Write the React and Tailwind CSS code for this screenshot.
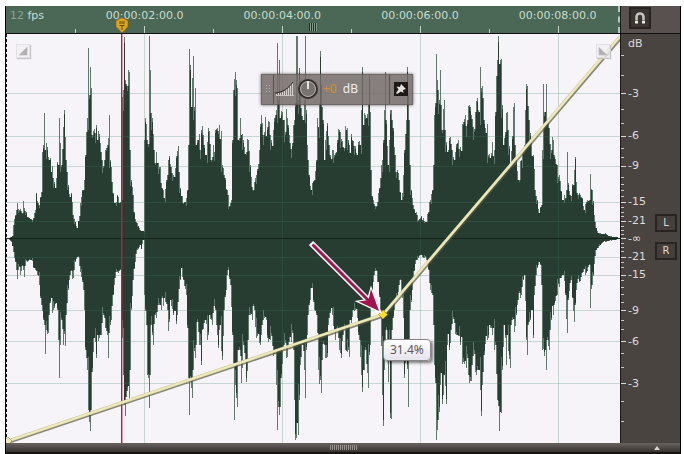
import React, { useState } from 'react'

const TIMECODES = ['00:00:02:00.0', '00:00:04:00.0', '00:00:06:00.0', '00:00:08:00.0']

// y positions on the same axis as the wave view
const DB_MARKS = [
  { label: 'dB',  y: 44 },
  { label: '-3',  y: 94 },
  { label: '-6',  y: 136 },
  { label: '-9',  y: 166 },
  { label: '-15', y: 202 },
  { label: '-21', y: 221 },
  { label: '-∞',  y: 239 },
  { label: '-21', y: 257 },
  { label: '-15', y: 275 },
  { label: '-9',  y: 311 },
  { label: '-6',  y: 342 },
  { label: '-3',  y: 384 },
]

const TOP = 34
const BOTTOM = 443
const MID = 238
const GRID_Y = [93, 136, 166, 202, 221, 257, 275, 310, 341, 383]
const GRID_X = [145, 283, 421, 559]
const MINOR_TICKS = [55, 75, 109, 123, 148, 157, 177, 184, 190, 196, 207, 212, 216, 226, 230, 234, 243, 247, 251, 262, 267, 280, 287, 294, 302, 320, 329, 353, 367, 401, 421]

const UPPER = [
  8,238, 12,236, 13,225, 15,215, 17,203, 19,210, 22,213, 23,201, 25,211, 27,217, 33,218, 35,210, 36,193, 38,203, 39,205, 41,192, 42,152,
  43,145, 44,113, 45,150, 46,143, 48,157, 50,158, 53,178, 55,188, 57,162, 58,165, 59,118, 60,143, 61,165, 63,127, 64,110, 65,137, 66,160, 68,185,
  70,197, 71,193, 73,215, 75,222, 77,228, 79,216, 80,203, 82,190, 84,180, 85,155, 86,132, 87,118, 88,48, 89,95, 90,67, 91,88, 92,135,
  94,129, 96,125, 97,140, 99,134, 101,152, 104,160, 106,148, 108,138, 109,115, 110,160, 112,182, 114,203, 117,195, 119,203, 121,200,
  122,97, 123,90, 124,37, 125,80, 127,86, 128,70, 129,72, 130,150, 131,180, 133,195, 134,212, 136,222, 140,230, 143,231, 144,140,
  145,118, 146,124, 148,144, 149,36, 150,70, 151,113, 152,118, 153,134, 154,150, 157,163, 160,167, 162,188, 164,198, 166,180, 168,160,
  170,164, 173,175, 175,168, 178,146, 179,172, 181,196, 183,203, 185,202, 187,190, 188,145, 189,49, 190,65, 191,107, 192,78, 193,56,
  194,107, 195,88, 196,145, 199,134, 200,150, 201,130, 203,135, 205,155, 207,142, 209,131, 211,160, 213,145, 217,128, 219,125, 221,131,
  222,165, 225,178, 227,190, 229,206, 231,200, 232,140, 233,90, 234,79, 236,80, 237,88, 238,140, 240,118, 241,135, 243,140, 246,152,
  248,140, 250,165, 253,190, 256,175, 259,150, 261,115, 263,135, 265,117, 267,127, 269,122, 271,140, 273,130, 276,110, 277,43, 278,100,
  279,60, 280,118, 282,112, 284,120, 287,118, 289,135, 292,143, 294,120, 295,103, 296,36, 297,36, 298,100, 299,68, 301,108, 303,120,
  304,100, 305,36, 306,110, 307,145, 309,175, 311,190, 314,180, 316,160, 317,118, 319,105, 320,51, 321,85, 323,120, 324,160, 327,123,
  329,145, 332,150, 334,155, 337,140, 340,132, 342,141, 346,130, 347,128, 349,145, 352,140, 355,146, 358,142, 360,145, 361,110, 362,67,
  363,125, 366,118, 368,105, 369,74, 370,112, 371,170, 372,196, 374,204, 377,202, 379,188, 381,165, 383,140, 384,110, 385,72, 386,120,
  388,165, 389,140, 390,110, 393,128, 395,155, 397,170, 399,180, 401,200, 403,175, 404,150, 406,120, 407,67, 408,95, 409,120, 410,165,
  411,190, 413,205, 416,212, 418,220, 421,216, 424,221, 426,222, 427,214, 430,200, 432,190, 433,165, 434,115, 436,54, 437,80, 439,100,
  440,70, 441,105, 442,130, 444,100, 445,130, 448,150, 450,137, 452,150, 455,152, 458,140, 460,147, 463,122, 465,115, 467,120, 470,107,
  472,119, 475,112, 477,98, 479,112, 480,67, 481,88, 483,98, 484,120, 487,124, 488,155, 490,158, 492,142, 494,150, 495,112, 496,76,
  498,36, 500,60, 501,59, 502,105, 503,145, 506,113, 508,130, 510,165, 513,107, 514,103, 515,145, 518,180, 521,160, 524,145, 525,110,
  526,84, 528,106, 529,120, 531,138, 533,155, 535,190, 537,200, 539,213, 541,205, 542,150, 543,84, 544,112, 546,84, 547,120, 549,128,
  551,150, 552,137, 554,155, 557,165, 559,175, 562,200, 564,195, 566,190, 567,152, 568,183, 570,195, 573,185, 575,157, 576,182, 578,195,
  582,198, 584,210, 587,200, 589,200, 590,174, 592,190, 594,215, 596,228, 598,233, 602,234, 605,233, 608,236, 615,237, 620,238,
]

const LOWER = [
  8,239, 11,242, 13,252, 15,262, 17,279, 19,267, 20,275, 22,266, 24,277, 26,261, 30,260, 34,268, 37,275, 39,285, 41,305, 43,320, 44,325,
  45,354, 46,330, 48,333, 50,303, 53,310, 55,304, 57,310, 58,340, 59,378, 60,345, 61,320, 63,345, 65,346, 66,315, 68,290, 70,275, 73,278,
  75,262, 78,257, 80,272, 83,290, 85,350, 86,358, 87,370, 88,410, 89,422, 90,431, 91,410, 92,372, 93,352, 94,338, 96,358, 97,335, 101,335,
  104,318, 107,335, 108,358, 110,325, 112,306, 114,285, 117,272, 120,270, 121,320, 123,375, 125,416, 126,397, 129,398, 130,370, 131,310,
  133,280, 135,262, 137,250, 140,245, 141,249, 143,240, 144,295, 146,325, 147,375, 149,408, 150,375, 151,325, 153,345, 155,315, 158,305,
  161,310, 164,298, 167,310, 168,331, 170,300, 173,315, 176,324, 178,302, 180,280, 181,268, 183,280, 186,295, 188,378, 189,415, 190,380,
  192,398, 193,370, 195,358, 197,322, 199,345, 201,365, 202,330, 205,320, 207,340, 209,315, 212,325, 215,310, 218,348, 220,325, 222,360,
  224,310, 226,290, 228,270, 230,285, 232,335, 234,420, 235,385, 237,407, 238,350, 241,383, 243,345, 246,382, 248,340, 249,315, 252,320,
  254,310, 256,338, 259,343, 262,325, 264,318, 267,338, 270,340, 272,346, 275,350, 276,385, 277,430, 279,415, 281,378, 283,350, 286,358,
  288,345, 291,342, 293,350, 294,400, 295,440, 296,438, 298,435, 299,400, 300,365, 302,345, 304,370, 305,398, 306,350, 308,315, 310,300,
  312,288, 314,310, 316,315, 318,370, 320,380, 321,393, 322,360, 324,345, 327,357, 328,325, 332,315, 335,340, 338,338, 341,358, 343,335,
  347,352, 349,357, 350,320, 353,310, 357,318, 359,340, 361,375, 362,392, 363,370, 365,350, 368,388, 370,345, 371,300, 373,282, 375,271,
  378,282, 380,310, 382,395, 383,426, 384,370, 386,330, 388,382, 389,340, 390,418, 391,419, 392,330, 394,310, 396,300, 400,280, 401,292,
  403,318, 404,378, 406,345, 408,407, 409,350, 410,310, 413,280, 416,260, 419,256, 422,257, 425,257, 428,270, 430,290, 432,295, 434,365,
  436,440, 437,430, 439,412, 440,385, 443,395, 444,375, 446,404, 447,345, 449,350, 451,330, 454,323, 457,335, 460,345, 463,362, 466,368,
  468,375, 471,381, 472,365, 475,372, 478,370, 480,390, 481,416, 482,385, 484,355, 487,340, 489,325, 492,335, 495,345, 497,400, 499,431,
  500,412, 501,413, 502,370, 504,325, 506,365, 507,335, 510,368, 511,325, 514,332, 516,315, 518,300, 520,298, 524,275, 526,340, 527,355,
  528,325, 530,320, 532,310, 533,338, 534,295, 536,275, 538,265, 540,265, 541,285, 542,350, 544,356, 546,370, 547,340, 549,350, 551,320,
  554,305, 557,295, 560,278, 563,275, 565,295, 567,333, 568,300, 571,280, 574,322, 576,290, 579,282, 583,272, 586,273, 589,265, 590,308,
  592,285, 594,264, 596,250, 599,246, 603,242, 608,241, 620,239,
]

// expands the x,y pairs to one level per pixel column
function sample(points) {
  const levels = []
  for (let i = 0; i < points.length - 2; i += 2) {
    const [x0, y0, x1, y1] = points.slice(i, i + 4)
    for (let x = x0; x < x1; x++) {
      const level = Math.abs(y0 + ((y1 - y0) * (x - x0)) / (x1 - x0) - MID)
      const ripple = x === x0 ? 1 : 1.08 - ((x * 7919) % 13) / 60
      levels.push(level * ripple)
    }
  }
  return levels
}

// the solid body is the lowest level among the neighbouring columns
function body(levels) {
  return levels.map((v, i) => {
    const near = Math.min(levels[i - 1] ?? v, v, levels[i + 1] ?? v)
    const noise = (i * 104729) % 7
    if (noise < 2) return v * 0.97
    return noise === 6 ? near * 0.9 : near
  })
}

function toPath(levels, sign) {
  return levels
    .map((v, i) => `M${8 + i} ${MID}h1v${Math.round(v) * sign}h-1z`)
    .join('')
}

const upper = sample(UPPER)
const lower = sample(LOWER)
const PEAKS = toPath(upper, -1) + toPath(lower, 1)
const BODY = toPath(body(upper), -1) + toPath(body(lower), 1)

export default function App() {
  return (
    <main className="flex h-screen min-h-80 flex-col bg-white pl-[5px] pr-[3px] pt-1.5 font-['DejaVu_Sans',sans-serif] text-[11px] text-[#dedbd7]">
      <div className="flex min-h-0 flex-1 flex-col border-x border-black bg-[#4a4441]">
        <header className="flex h-7 shrink-0 border-b border-[#111]">
          <Ruler />
          <div className="w-[60px] shrink-0 border-l border-[#1c1918] bg-[#59514f] pl-2 pt-px">
            <button aria-label="Snapping" className="flex h-[22px] w-[22px] items-center justify-center border-2 border-[#292422] bg-[#3b3532]">
              <MagnetIcon className="h-3.5 w-3.5" />
            </button>
          </div>
        </header>

        <div className="flex min-h-0 flex-1">
          <WaveView />
          <Scale />
        </div>

        <ScrollBar />
      </div>
    </main>
  )
}

function Ruler() {
  return (
    <div className="relative flex min-w-0 flex-1 flex-col border-r-2 border-dashed border-[#b9c6bd] bg-[#4b6857] text-[#c9dccd]">
      <div className="flex h-5 items-center overflow-hidden whitespace-nowrap">
        <span className="w-[11.4%] shrink-0 pl-1"><span className="text-[#8aa292]">12</span> fps</span>
        {TIMECODES.map((t) => (
          <span key={t} className="w-[22.5%] shrink-0 text-center">{t}</span>
        ))}
      </div>
      <svg className="h-[7px] w-full" viewBox="6 0 612 7" preserveAspectRatio="none" shapeRendering="crispEdges">
        {GRID_X.map((x) => (
          <path key={x} d={`M${x - 69.5} 3v4M${x - 0.5} 0v7`} stroke="#c3d3c8" fill="none" />
        ))}
      </svg>
      {/* zoom handle */}
      <svg className="absolute bottom-0.5 left-[49.3%] h-2 w-2.5" viewBox="0 0 10 8" shapeRendering="crispEdges">
        <path d="M1.5 0v8M3.5 0v8M5.5 0v8M7.5 0v8" stroke="#20352a" />
        <path d="M2.5 0v8M4.5 0v8M6.5 0v8M8.5 0v8" stroke="#83998b" />
      </svg>
      {/* playhead cap */}
      <svg className="absolute bottom-0 left-[18.9%] h-[15px] w-[13px] -translate-x-1/2" viewBox="0 0 13 15">
        <path d="M.5 2.5C2.5 2.5 3.5 0 6.5 0s4 2.5 6 2.5V8.5L6.5 15 .5 8.5z" fill="#dda51e" stroke="#8d6710" strokeWidth=".7" />
        <path d="M4.5 3v3M6.5 3v3M8.5 3v3M4 7.5h5M6.5 8v4" stroke="#5c4208" strokeWidth=".9" fill="none" />
      </svg>
    </div>
  )
}

function WaveView() {
  return (
    <section aria-label="Waveform" className="relative min-w-0 flex-1 overflow-hidden bg-[#f6f4f8]">
      <svg className="block h-full w-full" viewBox="6 34 614 409" preserveAspectRatio="none">
        <g shapeRendering="crispEdges">
          <path d={PEAKS} fill="#61796d" />
          <path d={BODY} fill="#273d32" />
          {GRID_Y.map((y) => (
            <path key={y} d={`M6 ${y}.5H620`} stroke="#3f7a5a" strokeOpacity=".25" />
          ))}
          {GRID_X.map((x) => (
            <path key={x} d={`M${x - 0.5} 34V443`} stroke="#3f7a5a" strokeOpacity=".25" />
          ))}
          <path d="M6 238.5H620" stroke="#12241a" />
          <path d="M6.5 34V443" stroke="#111" strokeDasharray="3 2" />
        </g>
        <rect x="121" y="34" width="1.4" height="409" fill="#b5203f" />

        {/* volume envelope */}
        <path d="M8 443L384 316.5L621 38.5" fill="none" stroke="#55564a" strokeOpacity=".7" strokeWidth="2" />
        <path d="M8 441L383 314.5L620 36.5" fill="none" stroke="#c9c58b" strokeWidth="3" />
        <path d="M8 441L383 314.5L620 36.5" fill="none" stroke="#eeeabb" strokeWidth="2" />
        <path d="M8 437l4 4-4 4-4-4z" fill="#eeeabb" stroke="#999675" strokeWidth=".8" />
        <path d="M383 310l4.5 4.5-4.5 4.5-4.5-4.5z" fill="#ffe11a" stroke="#a68b10" strokeWidth=".8" />

        {/* pointer arrow */}
        <path d="M311 243L369 301" stroke="#fff" strokeWidth="6" />
        <path d="M382 314L354.5 301L367 299L371 285.5z" fill="#fff" />
        <path d="M312.5 244.5L369 301" stroke="#a5134f" strokeWidth="3" />
        <path d="M379 311L358.5 301.5L368.5 300L371 289z" fill="#a5134f" />
      </svg>

      <FadeHandle label="Fade in" className="left-2.5" shape="M12 2V12H2z" />
      <FadeHandle label="Fade out" className="right-2.5" shape="M2 2V12H12z" />

      <GainHud />

      <output className="absolute left-[61.4%] top-[74.6%] flex h-[22px] items-center rounded-sm border border-[#8a8588] bg-linear-to-b from-white to-[#e6e4ec] px-1.5 font-['Noto_Sans',sans-serif] text-[12px] text-[#5d5557] shadow-[2px_2px_3px_rgba(0,0,0,0.5)]">
        31.4%
      </output>
    </section>
  )
}

function FadeHandle({ label, className, shape }) {
  return (
    <button aria-label={label} className={`absolute top-2.5 h-3.5 w-3.5 border border-[#e3e0e5] bg-[#f1eff2]/70 shadow-[1px_1px_1px_#c8c5c9] ${className}`}>
      <svg className="h-3 w-3" viewBox="0 0 14 14">
        <path d={shape} fill="#b4b1b5" />
      </svg>
    </button>
  )
}

function GainHud() {
  const [gain, setGain] = useState('+0')

  return (
    <div className="absolute left-[41.5%] top-[9.7%] flex h-[31px] w-[152px] items-center border border-[#55504f]/50 bg-[#736a68]/85 shadow-[0_0_3px_rgba(40,30,30,0.7)]">
      <div className="flex h-full w-3 items-center justify-end border-r border-[#5a5251] pr-px">
        <svg className="h-2.5 w-2" viewBox="0 0 8 10" shapeRendering="crispEdges">
          <path d="M2.5 1v8M5.5 1v8" stroke="#b5afab" strokeDasharray="1 2" />
        </svg>
      </div>
      <svg className="ml-px h-4 w-5" viewBox="0 0 20 16">
        <path d="M1.5 14v-1M3.5 14v-2M5.5 14v-2M7.5 14v-3M9.5 14v-4M11.5 14v-6M13.5 14v-8M15.5 14V4M17.5 14V2" stroke="#d5d0cc" />
        <path d="M0 12C8 11 13 8 18 1" stroke="#2c2726" fill="none" />
        <path d="M1 14.5H19" stroke="#c8c3bf" />
      </svg>
      <button aria-label="Gain knob" className="ml-0.5 h-[22px] w-[22px]">
        <svg className="h-full w-full" viewBox="0 0 22 22">
          <circle cx="11" cy="11" r="9" fill="#5f5856" stroke="#332d2c" strokeWidth="2" />
          <circle cx="11" cy="11" r="7.5" fill="#787270" stroke="#b4aeaa" strokeWidth="1" />
          <path d="M11 3V11" stroke="#fff" strokeWidth="1.6" />
        </svg>
      </button>
      <label className="flex items-center pl-1 font-['Noto_Sans',sans-serif] text-[12px] text-[#f0eeec]">
        <input
          value={gain}
          onChange={(e) => setGain(e.target.value)}
          className="w-5 bg-transparent text-[#d68f2c] outline-none"
        />
        dB
      </label>
      <div className="ml-auto flex h-full items-center border-l border-[#5a5251] px-1">
        <button aria-label="Pin" className="flex h-3.5 w-3.5 items-center justify-center bg-[#1d1918]">
          <PinIcon className="h-3 w-3" />
        </button>
      </div>
    </div>
  )
}

function Scale() {
  return (
    <aside className="flex w-[60px] shrink-0 border-l border-[#1c1918]">
      <svg className="h-full w-1.5" viewBox="0 34 6 409" preserveAspectRatio="none" shapeRendering="crispEdges">
        {MINOR_TICKS.map((y) => (
          <path key={y} d={`M0 ${y}.5h3`} stroke="#c9c5c1" />
        ))}
        {[...GRID_Y, MID].map((y) => (
          <path key={y} d={`M0 ${y}.5h5`} stroke="#dedbd7" />
        ))}
      </svg>
      <ul className="flex flex-1 flex-col pl-px">
        {DB_MARKS.map(({ label, y }, i) => (
          <React.Fragment key={y}>
            <li style={{ flexGrow: y - (i ? DB_MARKS[i - 1].y : TOP) }} />
            <li className="flex h-0 items-center whitespace-nowrap">{label}</li>
          </React.Fragment>
        ))}
        <li style={{ flexGrow: BOTTOM - DB_MARKS[DB_MARKS.length - 1].y }} />
      </ul>
      <div className="flex flex-col justify-center gap-2.5 pb-1 pr-[3px] text-[10px]">
        {['L', 'R'].map((channel) => (
          <button key={channel} className="flex h-[18px] w-[22px] items-center justify-center border-2 border-[#292422] bg-[#453f3c]">
            {channel}
          </button>
        ))}
      </div>
    </aside>
  )
}

function ScrollBar() {
  return (
    <footer className="flex h-[11px] shrink-0 items-center border-b-2 border-[#171514] bg-linear-to-b from-[#6a6461] to-[#383330]">
      <div className="flex flex-1 justify-center pl-7">
        <svg className="h-[5px] w-7" viewBox="0 0 28 5" shapeRendering="crispEdges">
          <path d="M0 2.5H28" stroke="#98928e" strokeWidth="5" strokeDasharray="1 1" />
        </svg>
      </div>
      <svg className="mr-5 h-1 w-1.5" viewBox="0 0 6 4">
        <path d="M3 0L6 4H0z" fill="#d8d4d0" />
      </svg>
    </footer>
  )
}

function MagnetIcon({ className = '' }) {
  return (
    <svg className={className} viewBox="0 0 14 14" fill="none">
      <path d="M3.5 9.5V6a3.5 3.5 0 017 0v3.5" stroke="#c7c2be" strokeWidth="2.6" />
      <path d="M2 10h3v2.5H2zM9 10h3v2.5H9z" fill="#f1eeeb" />
    </svg>
  )
}

function PinIcon({ className = '' }) {
  return (
    <svg className={className} viewBox="0 0 12 12">
      <path d="M6 1L11 6L9.5 6.5L8 7L8.5 10L6 8.5L2 11L1 10L3.5 6.5L1.5 3.5L5 4L5.5 2.5z" fill="#e4e1de" />
    </svg>
  )
}
